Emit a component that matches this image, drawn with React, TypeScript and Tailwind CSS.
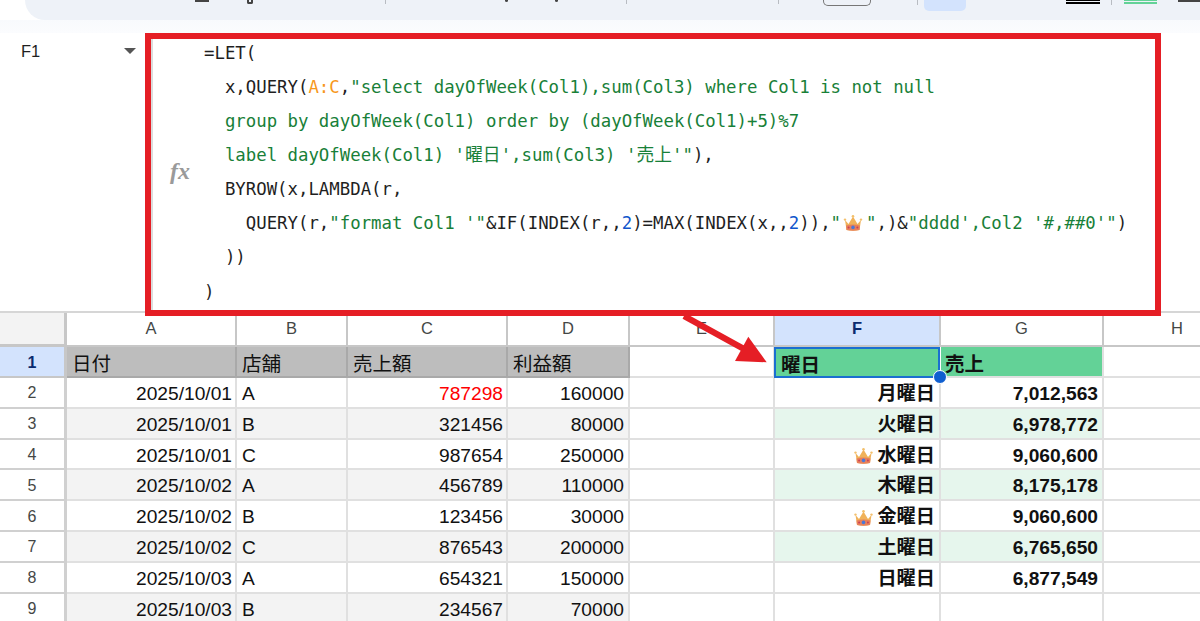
import type { ReactNode } from "react";

const sans = "font-['Liberation_Sans','Noto_Sans_CJK_JP',sans-serif]";

// column widths as measured, 67 + A..H
const colW = {
  A: "w-[170px]",
  B: "w-[111px]",
  C: "w-[160px]",
  D: "w-[122px]",
  E: "w-[145px]",
  F: "w-[166px]",
  G: "w-[163px]",
  H: "w-[148px]",
};

type Row = {
  n: number;
  date: string;
  store: string;
  sales: string;
  profit: string;
  day?: string;
  crown?: boolean;
  total?: string;
};

const rows: Row[] = [
  { n: 2, date: "2025/10/01", store: "A", sales: "787298", profit: "160000", day: "月曜日", total: "7,012,563" },
  { n: 3, date: "2025/10/01", store: "B", sales: "321456", profit: "80000", day: "火曜日", total: "6,978,772" },
  { n: 4, date: "2025/10/01", store: "C", sales: "987654", profit: "250000", day: "水曜日", crown: true, total: "9,060,600" },
  { n: 5, date: "2025/10/02", store: "A", sales: "456789", profit: "110000", day: "木曜日", total: "8,175,178" },
  { n: 6, date: "2025/10/02", store: "B", sales: "123456", profit: "30000", day: "金曜日", crown: true, total: "9,060,600" },
  { n: 7, date: "2025/10/02", store: "C", sales: "876543", profit: "200000", day: "土曜日", total: "6,765,650" },
  { n: 8, date: "2025/10/03", store: "A", sales: "654321", profit: "150000", day: "日曜日", total: "6,877,549" },
  { n: 9, date: "2025/10/03", store: "B", sales: "234567", profit: "70000" },
];

function Crown({ className }: { className: string }) {
  return (
    <svg viewBox="0 0 20 18" className={className}>
      <path d="M2 6 L5.5 10 L10 2.5 L14.5 10 L18 6 L16.5 16 Q10 17.5 3.5 16 Z" fill="#f0b25a" />
      <path d="M3 11.5 Q10 9.5 17 11.5 L16.5 16 Q10 17.5 3.5 16 Z" fill="#e8805a" />
      <circle cx="10" cy="13.4" r="1.8" fill="#4a78d8" />
      <circle cx="5.6" cy="13.6" r="1" fill="#c9405a" />
      <circle cx="14.4" cy="13.6" r="1" fill="#c9405a" />
      <circle cx="2" cy="5.6" r="1.2" fill="#f3c06c" />
      <circle cx="10" cy="2.2" r="1.3" fill="#f3c06c" />
      <circle cx="18" cy="5.6" r="1.2" fill="#f3c06c" />
    </svg>
  );
}

function G({ children }: { children: ReactNode }) {
  return <span className="text-[#188038]">{children}</span>;
}

function Num({ children }: { children: ReactNode }) {
  return <span className="text-[#1155cc]">{children}</span>;
}

function Cjk({ children }: { children: ReactNode }) {
  return <span className="inline-block w-[35.6px] text-[17.8px] leading-none">{children}</span>;
}

function Toolbar() {
  return (
    <div className="flex h-5 items-start">
      <div className="ml-[25px] flex h-5 flex-1 items-start rounded-bl-[24px] bg-[#eef2f8]">
        <div className="ml-[170px] h-[2px] w-[14px] bg-[#444]" />
        <div className="ml-[38px] h-[4px] w-[6px] rounded-b-[2px] border-2 border-t-0 border-[#444]" />
        <div className="ml-[132px] h-[4px] w-px bg-[#b8bcc2]" />
        <div className="ml-[119px] h-[2px] w-[3px] rounded-b-full bg-[#444]" />
        <div className="ml-[47px] h-[2px] w-[3px] rounded-b-full bg-[#444]" />
        <div className="ml-[68px] h-[4px] w-px bg-[#b8bcc2]" />
        <div className="ml-[151px] h-[4px] w-px bg-[#b8bcc2]" />
        <div className="ml-[44px] h-[6px] w-[48px] rounded-b-[5px] border border-t-0 border-[#777]" />
        <div className="ml-[46px] h-[5px] w-px bg-[#b8bcc2]" />
        <div className="ml-[6px] h-[11px] w-[42px] rounded-b-[5px] bg-[#d3e3fd]" />
        <div className="ml-[100px] flex w-[34px] flex-col gap-[1px]">
          <div className="h-[1px] bg-black" />
          <div className="h-[2px] bg-black" />
        </div>
        <div className="ml-[11px] h-[5px] w-px bg-[#b8bcc2]" />
        <div className="ml-[12px] flex w-[33px] flex-col gap-[1px]">
          <div className="h-[1px] bg-[#63d297]" />
          <div className="h-[2px] bg-[#63d297]" />
        </div>
        <div className="ml-[21px] h-[2px] flex-1 bg-[#444]" />
      </div>
    </div>
  );
}

function FormulaBar() {
  return (
    <div className="flex h-[292px] bg-white">
      <div className={`${sans} flex h-[34px] w-[151px] shrink-0 items-start pl-[21px] pt-[20px] text-[16.5px] leading-none text-[#1f1f1f]`}>
        <span className="-mt-[10px]">F1</span>
        <span className="ml-[84px] mt-[-5px] h-0 w-0 border-x-[6px] border-t-[6px] border-x-transparent border-t-[#555]" />
      </div>
      <div className="flex w-[53px] shrink-0 flex-col border-l-2 border-[#dcdcdc]">
        <span className="ml-[17px] mt-[126px] font-['Liberation_Serif',serif] text-[24px] font-bold italic leading-none text-[#9a9a9a]">
          fx
        </span>
      </div>
      <pre className="font-['DejaVu_Sans_Mono','Noto_Sans_CJK_JP',monospace] text-[17.35px] leading-[34px] text-[#1f1f1f]">
        <div className="mt-[3px]">=LET(</div>
        <div>
          {"  x,QUERY("}
          <span className="text-[#f7981d]">A:C</span>
          {","}
          <G>"select dayOfWeek(Col1),sum(Col3) where Col1 is not null</G>
        </div>
        <div>
          <G>{"  group by dayOfWeek(Col1) order by (dayOfWeek(Col1)+5)%7"}</G>
        </div>
        <div>
          <G>{"  label dayOfWeek(Col1) '"}<Cjk>曜日</Cjk>{"',sum(Col3) '"}<Cjk>売上</Cjk>{"'\""}</G>
          {"),"}
        </div>
        <div>{"  BYROW(x,LAMBDA(r,"}</div>
        <div>
          {"    QUERY(r,"}
          <G>"format Col1 '"</G>
          {"&IF(INDEX(r,,"}
          <Num>2</Num>
          {")=MAX(INDEX(x,,"}
          <Num>2</Num>
          {")),"}
          <G>"</G>
          <span className="inline-block w-[25px] pl-[2px] align-[-3px]">
            <Crown className="h-[18px] w-[20px]" />
          </span>
          <G>"</G>
          {",)&"}
          <G>"dddd',Col2 '#,##0'"</G>
          {")"}
        </div>
        <div>{"  ))"}</div>
        <div className="mt-[1px]">{")"}</div>
      </pre>
    </div>
  );
}

function ColHead({ w, label, active }: { w: string; label: string; active?: boolean }) {
  return (
    <div
      className={`${w} flex h-full shrink-0 items-center justify-center border-b-2 border-r-2 border-[#c7c7c7] pb-[2px] text-[16.5px] ${
        active ? "bg-[#d3e3fd] font-bold text-[#0b2b6f]" : "bg-white text-[#444746]"
      }`}
    >
      {label}
    </div>
  );
}

function DataRow({ row }: { row: Row }) {
  const stripe = row.n % 2 === 1;
  const base = "flex h-full shrink-0 items-center border-b-2 border-r-2 border-[#e0e0e0] pt-[4px] px-[4px]";
  const grey = stripe ? "bg-[#f3f3f3]" : "bg-white";
  const hasResult = row.n < 9;
  const green = stripe && hasResult ? "bg-[#e6f6ed] border-[#d5e3db]" : "bg-white";

  return (
    <div className="flex h-[30.8px]">
      <div className="flex h-full w-[67px] shrink-0 items-center justify-center border-b-2 border-r-[3px] border-[#d0d0d0] bg-white pt-[2px] text-[16px] text-[#444746]">
        {row.n}
      </div>
      <div className={`${base} ${colW.A} ${grey} justify-end pr-[3px]`}>{row.date}</div>
      <div className={`${base} ${colW.B} ${grey} pl-[5px]`}>{row.store}</div>
      <div className={`${base} ${colW.C} ${grey} justify-end pr-[3px] ${row.n === 2 ? "text-[#ff0000]" : ""}`}>{row.sales}</div>
      <div className={`${base} ${colW.D} ${grey} justify-end`}>{row.profit}</div>
      <div className={`${base} ${colW.E} bg-white`} />
      <div className={`${base} ${colW.F} ${green} justify-end gap-[3px] font-bold`}>
        {row.crown && <Crown className="h-[18px] w-[21px]" />}
        {row.day}
      </div>
      <div className={`${base} ${colW.G} ${green} justify-end font-bold`}>{row.total}</div>
      <div className={`${base} ${colW.H} bg-white`} />
    </div>
  );
}

function Sheet() {
  const headCell = "flex h-full shrink-0 items-center border-b-2 border-r-2 pt-[6px] px-[5px] text-[19.5px]";
  return (
    <div className={`${sans} border-t-2 border-[#d6d6d6] text-[19.2px] text-[#111]`}>
      <div className="flex h-[34px]">
        <div className="h-full w-[67px] shrink-0 border-b-[3px] border-r-[3px] border-[#c7c7c7] bg-[#f3f3f3]" />
        <ColHead w={colW.A} label="A" />
        <ColHead w={colW.B} label="B" />
        <ColHead w={colW.C} label="C" />
        <ColHead w={colW.D} label="D" />
        <ColHead w={colW.E} label="E" />
        <ColHead w={colW.F} label="F" active />
        <ColHead w={colW.G} label="G" />
        <ColHead w={colW.H} label="H" />
      </div>
      <div className="flex h-[31px]">
        <div className="flex h-full w-[67px] shrink-0 items-center justify-center border-b-2 border-r-[3px] border-[#c7c7c7] bg-[#d3e3fd] pt-[2px] text-[16px] font-bold text-[#0b2b6f]">
          1
        </div>
        <div className={`${headCell} ${colW.A} border-[#a9a9a9] bg-[#bdbdbd]`}>日付</div>
        <div className={`${headCell} ${colW.B} border-[#a9a9a9] bg-[#bdbdbd]`}>店舗</div>
        <div className={`${headCell} ${colW.C} border-[#a9a9a9] bg-[#bdbdbd]`}>売上額</div>
        <div className={`${headCell} ${colW.D} border-[#a9a9a9] bg-[#bdbdbd]`}>利益額</div>
        <div className={`${headCell} ${colW.E} border-[#e0e0e0] bg-white`} />
        <div className={`relative ${headCell} ${colW.F} -ml-px border-2 border-[#1b6fd0] bg-[#63d297] pl-[5px] pt-[4px] font-bold`}>
          曜日
          <span className="absolute -bottom-[8px] -right-[9px] z-10 h-[14px] w-[14px] rounded-full border border-white bg-[#0f5fd0]" />
        </div>
        <div className={`${headCell} ${colW.G} ml-px border-[#e0e0e0] bg-[#63d297] pl-[4px] font-bold`}>売上</div>
        <div className={`${headCell} ${colW.H} border-[#e0e0e0] bg-white`} />
      </div>
      {rows.map((row) => (
        <DataRow key={row.n} row={row} />
      ))}
    </div>
  );
}

export default function App() {
  return (
    <div className="relative h-[621px] w-[1200px] overflow-hidden bg-white">
      <Toolbar />
      <div className="h-[13px] bg-gradient-to-b from-[#f8fafd] to-[#fbfcfe]" />
      <FormulaBar />
      <div className="-mt-[14px]">
        <Sheet />
      </div>

      {/* red annotation box + arrow sit on top of the sheet */}
      <div className="pointer-events-none absolute left-[145px] top-[33px] h-[283px] w-[1016px] border-[6px] border-[#e51e25]" />
      <svg className="pointer-events-none absolute left-[670px] top-[305px] h-[70px] w-[110px]" viewBox="0 0 110 70">
        <line x1="14" y1="11" x2="74" y2="44" stroke="#e51e25" strokeWidth="6" />
        <polygon points="96.7,57.3 78.3,31.7 65,56" fill="#e51e25" />
      </svg>
    </div>
  );
}
